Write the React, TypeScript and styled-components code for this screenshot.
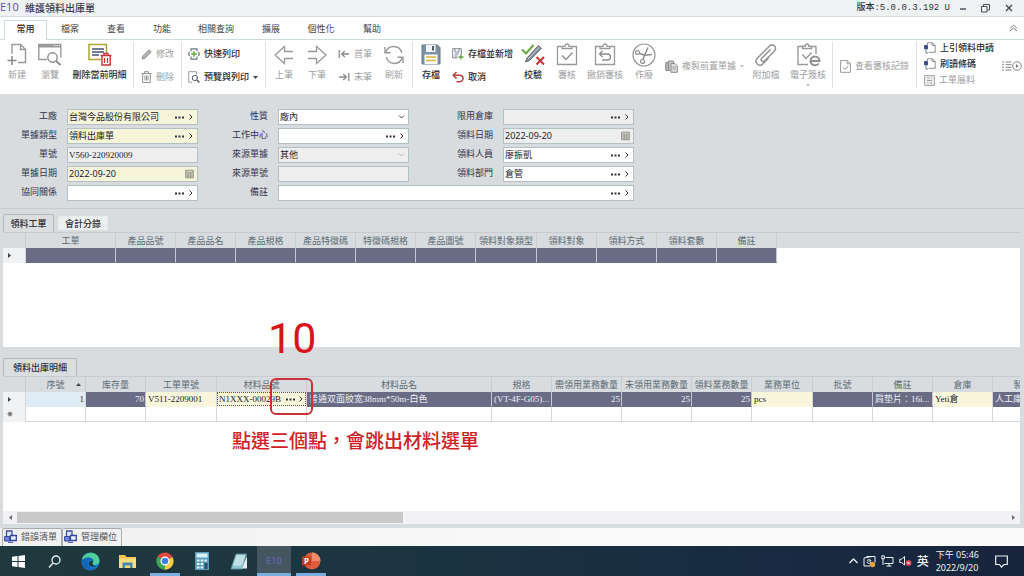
import React from "react";
import styled, { createGlobalStyle, css } from "styled-components";

const sans = `"Noto Sans", "Noto Sans CJK TC", sans-serif`;
const cjk = `"Noto Sans CJK TC", sans-serif`;
const serif = `"Liberation Serif", "Noto Sans CJK TC", serif`;
const mono = `"Liberation Mono", "Noto Sans CJK TC", monospace`;

const GlobalStyle = createGlobalStyle`
  *, *::before, *::after { box-sizing: border-box; }
  body { margin: 0; overflow: hidden; background: #d8dcde; }
  button, input, select {
    font: inherit; color: inherit; border: 0; padding: 0; margin: 0;
    background: none; border-radius: 0; outline: none; min-width: 0;
  }
  svg { display: block; flex: none; }
`;

/* ---------- window frame ---------- */

const Window = styled.div`
  display: flex;
  flex-direction: column;
  min-height: 100vh;
  font: 9px/12px ${cjk};
  color: #2a2a40;
  background: #d8dcde;
`;

const TitleBar = styled.header`
  display: flex;
  align-items: center;
  height: 17px;
  padding-right: 7px;
  background: #eef2f3;
  border-bottom: 1px solid #d5dddf;
`;

const Brand = styled.span`
  width: 25px;
  font: 11px/12px "Open Sans", ${sans};
  color: #5b4fa0;
  padding-bottom: 3px;
`;

const Title = styled.h1`
  margin: 0;
  flex: 1;
  font: 500 10px/16px ${cjk};
  color: #3a3a4a;
`;

const Version = styled.span`
  font: 500 9px/14px ${mono};
  color: #33333d;
  margin-right: 4px;
`;

const WindowButton = styled.button`
  width: 23px;
  height: 16px;
  display: flex;
  align-items: center;
  justify-content: center;
  color: #4a4a55;
  &:last-child { width: 16px; margin-left: 4px; }
  &:first-of-type { width: 16px; margin-right: 4px; }
`;

const MenuTabs = styled.nav`
  display: flex;
  align-items: flex-end;
  height: 23px;
  padding: 0 6px 0 4px;
  background: #fff;
  border-bottom: 1px solid #cddddd;
`;

const MenuTab = styled.button<{ $w: number; $active?: boolean }>`
  width: ${(p) => p.$w}px;
  height: 19px;
  padding-bottom: 2px;
  color: #44444c;
  ${(p) =>
    p.$active &&
    css`
      color: #2a2a30;
      height: 20px;
      margin-bottom: -1px;
      padding-bottom: 3px;
      font-weight: 500;
      background: #fff;
      border: 1px solid #cddddd;
      border-bottom: 0;
    `}
`;

const CollapseButton = styled.button`
  margin-left: auto;
  height: 22px;
  color: #77777f;
`;

/* ---------- ribbon ---------- */

const Ribbon = styled.div`
  display: flex;
  height: 54px;
  overflow: hidden;
  background: #fff;
`;

const Divider = styled.span`
  flex: none;
  width: 1px;
  height: 46px;
  margin-top: 2px;
  background: #e0e3e4;
`;

const BigButton = styled.button<{ $w: number; $on?: boolean }>`
  flex: none;
  display: flex;
  flex-direction: column;
  align-items: center;
  width: ${(p) => p.$w}px;
  padding-top: 3px;
  gap: 2px;
  white-space: nowrap;
  color: ${(p) => (p.$on ? "#2b2b33" : "#a0a0a0")};
  font-weight: ${(p) => (p.$on ? 500 : 400)};
`;

const Stack = styled.div<{ $w: number; $pad: number; $rows: number }>`
  flex: none;
  display: flex;
  flex-direction: column;
  width: ${(p) => p.$w}px;
  padding-left: ${(p) => p.$pad}px;
  padding-top: ${(p) => (p.$rows === 3 ? 0 : p.$rows === 2 ? 6 : 18)}px;
  gap: ${(p) => (p.$rows === 2 ? 7 : 0)}px;
`;

const SmallButton = styled.button<{ $on?: boolean }>`
  display: flex;
  align-items: center;
  height: 16px;
  gap: 4px;
  white-space: nowrap;
  color: ${(p) => (p.$on ? "#2b2b33" : "#a0a0a0")};
  font-weight: ${(p) => (p.$on ? 500 : 400)};
`;

const ListButton = styled.button`
  color: #8b8b8b;
  padding-left: 2px;
  height: 52px;
`;

/* ---------- form ---------- */

const Form = styled.form`
  display: grid;
  grid-template-columns: 57px 131px 60px 131px 74px 131px;
  grid-auto-rows: 16px;
  gap: 3px 10px;
  padding: 15px 0 7px;
  border-bottom: 1px solid #c8ccd0;
`;

const Label = styled.label`
  text-align: right;
  line-height: 14px;
  color: #34344e;
  white-space: nowrap;
`;

const tones = { need: "#f6f4d9", plain: "#ffffff", locked: "#eeeeee" };

const FieldBox = styled.div<{ $tone: keyof typeof tones; $wide?: boolean }>`
  display: flex;
  align-items: center;
  gap: 4px;
  padding: 0 3px 0 1px;
  border: 1px solid #b3c0c4;
  background: ${(p) => tones[p.$tone]};
  ${(p) => p.$wide && "grid-column: span 3;"}
`;

const TextInput = styled.input<{ $date?: boolean }>`
  flex: 1;
  height: 14px;
  font: 9px/14px ${(p) => (p.$date ? sans : serif)};
  color: #22222a;
`;

const Choice = styled.select`
  flex: 1;
  height: 14px;
  appearance: none;
  font: 9px/14px ${serif};
  color: #22222a;
  opacity: 1;
`;

const IconButton = styled.button`
  height: 12px;
  display: flex;
  align-items: center;
  color: #33333b;
`;

/* ---------- grids ---------- */

const Strip = styled.div<{ $h: number }>`
  display: flex;
  align-items: flex-end;
  gap: 4px;
  height: ${(p) => p.$h}px;
  padding-left: 3px;
`;

const SheetTab = styled.button<{ $w: number; $active?: boolean }>`
  width: ${(p) => p.$w}px;
  height: ${(p) => (p.$active ? 18 : 14)}px;
  margin-bottom: ${(p) => (p.$active ? 0 : 2)}px;
  font-weight: 500;
  color: #2e2e38;
  background: ${(p) => (p.$active ? "#dbdedf" : "#eef0f0")};
  border: 1px solid ${(p) => (p.$active ? "#b4b9bd" : "#e8ebec")};
  border-bottom: 0;
  border-radius: 2px 2px 0 0;
`;

const Panel = styled.section`
  position: relative;
  display: flex;
  flex-direction: column;
  flex: 1;
`;

const Sheet = styled.div<{ $min: number }>`
  flex: 1;
  min-height: ${(p) => p.$min}px;
  margin: 0 4px 0 3px;
  overflow: hidden;
  background: #fff;
`;

const Table = styled.table`
  width: 100%;
  table-layout: fixed;
  border-collapse: separate;
  border-spacing: 0;
`;

const Head = styled.th`
  position: relative;
  height: 16px;
  padding: 0;
  overflow: hidden;
  white-space: nowrap;
  font: 9px/14px ${cjk};
  color: #5d6b73;
  background: #d8dcde;
  border-top: 1px solid #c6cccf;
  border-right: 1px solid #c6cccf;
  &:last-child { border-right: 0; }
`;

const cellTones = {
  dark: css`background: #6a6c86; color: #f0f0f6; border-right-color: #c3c6d6;`,
  need: css`background: #f8f6db; color: #22222a;`,
  key: css`background: #dfecf5; color: #22222a;`,
  mark: css`background: #f1f2f3; color: #33333b; padding-left: 4px;`,
  blank: css`background: #fff; border-bottom-color: #d5d7d9;`,
  none: css`background: #fff; border-color: transparent;`,
};

const Cell = styled.td<{ $tone: keyof typeof cellTones; $right?: boolean }>`
  height: 15px;
  padding: 0 1px 0 2px;
  overflow: hidden;
  white-space: nowrap;
  font: 9px/12px ${serif};
  text-align: ${(p) => (p.$right ? "right" : "left")};
  border-right: 1px solid #d5d7d9;
  border-bottom: 1px solid transparent;
  background-clip: border-box;
  ${(p) => cellTones[p.$tone]}
`;

const CellEditor = styled.div`
  display: flex;
  align-items: center;
  gap: 3px;
  height: 14px;
  margin: 0 -1px 0 -2px;
  padding: 0 1px;
  border: 1px dotted #55555c;
`;

const CellInput = styled.input`
  flex: 1;
  height: 12px;
`;

const SortMark = styled.span`
  position: absolute;
  right: 4px;
  top: 5px;
`;

const ScrollRow = styled.div`
  display: flex;
  align-items: center;
  height: 13px;
  margin: 0 4px 4px 3px;
  background: #f2f2f4;
  color: #66666c;
`;

const ScrollArrow = styled.button`
  width: 14px;
  display: flex;
  justify-content: center;
`;

const ScrollTrack = styled.div`
  flex: 1;
`;

const ScrollThumb = styled.div`
  width: 39%;
  height: 11px;
  background: #c9c9c9;
`;

/* ---------- tutorial marks drawn over the grid ---------- */

const StepNumber = styled.strong`
  position: absolute;
  left: 268px;
  top: -34px;
  font: 400 43px/50px Roboto, sans-serif;
  color: #d8151b;
`;

const StepFrame = styled.span`
  position: absolute;
  left: 270px;
  top: 31px;
  width: 43px;
  height: 37px;
  border: 2px solid #c9323a;
  border-radius: 6px;
  pointer-events: none;
`;

const StepText = styled.p`
  position: absolute;
  left: 232px;
  top: 81px;
  margin: 0;
  font: 500 19px/24px ${cjk};
  color: #d02127;
  white-space: nowrap;
`;

/* ---------- bottom ---------- */

const DockBar = styled.div`
  display: flex;
  height: 18px;
  padding-left: 2px;
  background: linear-gradient(90deg, #f0f0f0, #f9faf9 60%);
`;

const DockTab = styled.button<{ $w: number }>`
  display: flex;
  align-items: center;
  gap: 4px;
  width: ${(p) => p.$w}px;
  height: 18px;
  padding: 0 0 2px 1px;
  color: #55555c;
  border: 1px solid #a9acae;
  border-bottom: 0;
  border-radius: 2px 2px 0 0;
`;

const TaskBar = styled.footer`
  display: flex;
  height: 30px;
  color: #eef2f4;
  background: linear-gradient(90deg, #20393e, #1b3440 40%, #182b42 75%, #18243c);
`;

const TaskButton = styled.button<{ $w?: number; $open?: boolean; $active?: boolean }>`
  flex: none;
  display: flex;
  align-items: center;
  justify-content: center;
  width: ${(p) => p.$w ?? 37}px;
  border-bottom: 3px solid transparent;
  border-top: 3px solid transparent;
  ${(p) =>
    p.$open &&
    css`
      background: linear-gradient(#79aee0, #79aee0) bottom / 30px 3px no-repeat border-box;
    `}
  ${(p) =>
    p.$active &&
    css`
      background: linear-gradient(#79aee0, #79aee0) bottom / 100% 3px no-repeat border-box, #44565f border-box;
    `}
`;

const AppMark = styled.span`
  font: 9px/12px ${sans};
  color: #7468c4;
`;

const Tray = styled.div`
  display: flex;
  align-items: center;
  margin-left: auto;
  gap: 5px;
  padding-right: 9px;
`;

const Ime = styled.span`
  font: 500 12px/14px ${cjk};
`;

const Clock = styled.time`
  font: 9px/13px ${sans};
  margin: 0 7px 0 2px;
  white-space: nowrap;
`;

const Notice = styled.button`
  width: 22px;
  padding-left: 4px;
  margin-right: 2px;
  height: 30px;
  display: flex;
  align-items: center;
`;

/* ---------- icons ---------- */

type IconProps = { w: number; h: number; sw?: number; children: React.ReactNode; vb?: string };
const Icon = ({ w, h, sw = 1, vb, children }: IconProps) => (
  <svg width={w} height={h} viewBox={vb ?? `0 0 ${w} ${h}`} fill="none" stroke="currentColor" strokeWidth={sw} aria-hidden="true">
    {children}
  </svg>
);

const NewIcon = () => (
  <Icon w={20} h={24} sw={1.4}>
    <path d="M5 11V1.5h8.5l5 5V19.500H11M13.500 1.500v5h5" stroke="#999" />
    <path d="M5 13v9M.5 17.500h9" stroke="#8d8d8d" strokeWidth={1.600} />
  </Icon>
);
const BrowseIcon = () => (
  <Icon w={24} h={24} sw={1.400}>
    <path d="M9 16.500H.8V1.500h22v13" stroke="#999" />
    <path d="M.8 3.200h22" stroke="#999" strokeWidth={2.600} />
    <path d="M16 2.500h1.200M18.500 2.500h1.200M21 2.500h1" stroke="#fff" strokeWidth={1} />
    <circle cx="14.500" cy="14.500" r="4.700" stroke="#8b8b8b" fill="#fff" />
    <path d="M18 18l4.500 4" stroke="#8b8b8b" strokeWidth={1.700} />
  </Icon>
);
const DeleteRowIcon = () => (
  <Icon w={24} h={24}>
    <path d="M13 16.500H1V1.500h17.500v9" stroke="#b0a530" strokeWidth={1.500} />
    <path d="M4 6h12M4 9h12M4 12h7" stroke="#45507a" strokeWidth={1.400} />
    <path d="M12.500 12.500h11M16 12v-1.500h4V12M14 12.500V22h8.200v-9.500" stroke="#c4343a" strokeWidth={1.400} fill="#fff" />
    <path d="M16.500 15v5M19.500 15v5" stroke="#c4343a" strokeWidth={1.200} />
  </Icon>
);
const PencilIcon = () => (
  <Icon w={11} h={11}>
    <path d="M1 10l.8-3L8 .8l2.200 2.200L4 9.200z" fill="#a6a6a6" stroke="#939393" />
    <path d="M2.500 8L8.500 2" stroke="#eee" strokeWidth={0.600} />
  </Icon>
);
const TrashIcon = () => (
  <Icon w={11} h={12}>
    <path d="M.5 2.500h10M3.500 2V.7h4V2M1.700 2.500v9h7.600v-9M4 4.500v5M5.500 4.500v5M7 4.500v5" stroke="#939393" />
  </Icon>
);
const QuickPrintIcon = () => (
  <Icon w={12} h={12}>
    <path d="M3 3.500V.8h6v2.700M3 8.500v2.700h6V8.500M1.500 4L.7 6l.8 2M10.500 4l.8 2-.8 2" stroke="#6d7680" strokeWidth={1.200} />
    <path d="M6 3.200v5.600M3.200 6h5.600" stroke="#62a83c" strokeWidth={1.500} />
  </Icon>
);
const PreviewIcon = () => (
  <Icon w={12} h={12}>
    <path d="M4 11.200H.7V.7h7.800v3" stroke="#9a9fa4" />
    <circle cx="6.800" cy="7" r="2.600" stroke="#4a5560" fill="#fff" />
    <path d="M8.800 9l2.500 2.500" stroke="#4a5560" strokeWidth={1.400} />
  </Icon>
);
const ArrowBig = ({ flip }: { flip?: boolean }) => (
  <Icon w={20} h={24} sw={1.300}>
    <path transform={flip ? "translate(20 0) scale(-1 1)" : undefined} d="M19 8.500h-8.500V3.500L1 12l9.500 8.500v-5H19" stroke="#999" />
  </Icon>
);
const FirstIcon = ({ flip }: { flip?: boolean }) => (
  <Icon w={12} h={10} sw={1.300}>
    <path transform={flip ? "translate(12 0) scale(-1 1)" : undefined} d="M1.200 1v8M11 5H4M6.800 2L3.700 5l3.100 3" stroke="#8a8a8a" />
  </Icon>
);
const RefreshIcon = () => (
  <Icon w={20} h={24} sw={1.400}>
    <path d="M1.800 9.500A8.300 8.300 0 0 1 17.800 9.800M18.200 14.500A8.300 8.300 0 0 1 2.200 14.200" stroke="#999" />
    <path d="M1 4v5.800h5.500M19 20v-5.800h-5.500" stroke="#999" />
  </Icon>
);
const SaveIcon = () => (
  <Icon w={20} h={24}>
    <path d="M1 2h15.500L19 4.500V21H1z" fill="#7d93a3" stroke="#657b8c" />
    <path d="M5 2h9.500v7H5z" fill="#f1f5f7" stroke="none" />
    <path d="M11 3h2v4.500h-2z" fill="#4c5d6b" stroke="none" />
    <path d="M3.500 11.500h13V21h-13z" fill="#fff" stroke="none" />
    <path d="M5 14h10M5 17.500h10" stroke="#d9b535" strokeWidth={1.400} />
  </Icon>
);
const SaveNewIcon = () => (
  <Icon w={12} h={12}>
    <path d="M.7.7h8.600v6M5.500 9.800H.7V.7" stroke="#7b8791" />
    <path d="M3 1v3h4V1M2.500 6h4.500M2.500 8h3" stroke="#7b8791" />
    <path d="M9 6.500v5M6.500 9H11.500" stroke="#5da437" strokeWidth={1.400} />
  </Icon>
);
const UndoIcon = () => (
  <Icon w={12} h={12} sw={1.500}>
    <path d="M4.500 1L1.200 4.200l3.300 3.200M1.500 4.200h6.300a3.200 3.200 0 0 1 0 6.500H4.500" stroke="#b8433f" />
  </Icon>
);
const CheckIcon = () => (
  <Icon w={24} h={24}>
    <path d="M1 6.500L5 10.500 12.500 2" stroke="#65a844" strokeWidth={2} />
    <path d="M4.500 19l1.500-4L17.500 2.500l3 2.700L8.500 17.500z" fill="#8a9299" stroke="#5e666d" />
    <path d="M7 16L18.500 4" stroke="#d9dde0" strokeWidth={0.800} />
    <path d="M15.500 14l7.500 7.500M23 14l-7.500 7.500" stroke="#c1363b" strokeWidth={2} />
  </Icon>
);
const Clipboard = ({ children }: { children: React.ReactNode }) => (
  <Icon w={24} h={24} sw={1.300}>
    <path d="M6.500 3.500h-4v18h19v-18h-4" stroke="#999" />
    <path d="M7 5.500v-2.200h3C10 1.500 11 1 12 1s2 .5 2 2.300h3v2.200z" stroke="#999" />
    <g stroke="#8d8d8d">{children}</g>
  </Icon>
);
const VoidIcon = () => (
  <Icon w={24} h={24} sw={1.200}>
    <circle cx="12" cy="12" r="11" stroke="#999" />
    <circle cx="5.500" cy="9.500" r="1.900" stroke="#8d8d8d" />
    <circle cx="10.500" cy="18.500" r="2" stroke="#8d8d8d" />
    <path d="M7.300 10.300L12.500 12.300 20 11.500M11 16.500L12.500 12.300 16 4.500" stroke="#8d8d8d" strokeWidth={1.500} />
  </Icon>
);
const CopyIcon = () => (
  <Icon w={13} h={13}>
    <path d="M3.500 10.500H.7V2.500H3" fill="#b5b5b5" stroke="#8d8d8d" />
    <path d="M3.500 1h5v9.500h-5z" fill="#c9c9c9" stroke="#8d8d8d" />
    <path d="M6 3.500h4l2.300 2.300v6.500H6z" fill="#ddd" stroke="#8d8d8d" />
    <path d="M7.500 7h3.300M7.500 9h3.300" stroke="#8d8d8d" strokeWidth={0.800} />
  </Icon>
);
const ClipIcon = () => (
  <Icon w={24} h={24} sw={1.500}>
    <path d="M16.500 6.500L7.800 15.300c-1.900 1.900.8 4.600 2.700 2.700L20.300 8.200c3.600-3.600-1.500-8.600-5-5L3.500 15c-4.500 4.500 1.800 9.500 5 6.300l6-6" stroke="#939393" />
  </Icon>
);
const SignIcon = () => (
  <Icon w={26} h={24} sw={1.400}>
    <path d="M7 3.500H3v18h10M17 3.500h4V11" stroke="#999" />
    <path d="M7.500 5.500v-2.200h2.700C10.200 1.500 11 1 12 1s1.800.5 1.800 2.300h2.700v2.200zM7.500 11.500l3.500 4 5.500-6" stroke="#999" />
    <path d="M15.500 18h9c0-5.800-9-6-9 0 0 4.800 6.300 5.300 8.500 2.500" stroke="#909090" strokeWidth={1.900} fill="#fff" />
  </Icon>
);
const RecordIcon = () => (
  <Icon w={11} h={13}>
    <path d="M.6.600h6.800l3 3v8.700H.6zM7.200.8v3h3" stroke="#999" />
    <path d="M3 7.500l2 2 3.200-3.500" stroke="#8a8a8a" />
  </Icon>
);
const LoadIcon = () => (
  <Icon w={12} h={12}>
    <path d="M3.500 3V.8h5l2.700 2.500v7H4.500M8.200 1v2.500h3" stroke="#8c8f96" />
    <path d="M.5 3.500h3v3.500h-3z" fill="#41508c" stroke="#41508c" />
    <path d="M2 8v3h2" stroke="#777" />
  </Icon>
);
const ExpandIcon = () => (
  <Icon w={11} h={11}>
    <path d="M.6.600h9.800v9.800H.6z" fill="#eee" stroke="#a2a2a2" />
    <path d="M3 3h2M6.500 3H8M3 5.500h5M3 8h1.500M6 8h2" stroke="#a2a2a2" />
  </Icon>
);
const MoreIcon = () => (
  <Icon w={20} h={12}>
    <path d="M0 2h2M0 4.700h2M0 7.300h2M0 10h2M3.500 2h6M3.500 4.700h6M3.500 7.300h6M3.500 10h6" stroke="#858585" />
    <circle cx="15" cy="6" r="4.300" />
    <path d="M14 4v4l2.500-2z" fill="#777" stroke="none" />
  </Icon>
);
const Dots = () => (
  <Icon w={9} h={3}>
    <path d="M0 .5h2v2H0zM3.500.5h2v2h-2zM7 .5h2v2H7z" fill="currentColor" stroke="none" />
  </Icon>
);
const Chevron = () => (
  <Icon w={6} h={8}>
    <path d="M1.500 1.500L4 4 1.500 6.500" />
  </Icon>
);
const DownChevron = ({ color }: { color: string }) => (
  <Icon w={7} h={6}>
    <path d="M1 1.500L3.500 4 6 1.500" stroke={color} />
  </Icon>
);
const CalendarIcon = () => (
  <Icon w={9} h={10}>
    <path d="M.7 1.200h7.600v7.600H.7zM.7 3h7.600M.7 5h7.600M.7 7h7.600M3.200 3v6M5.800 3v6" stroke="#8a8a80" strokeWidth={0.900} />
  </Icon>
);
const Triangle = ({ d, color = "#444", w = 5, h = 5 }: { d: string; color?: string; w?: number; h?: number }) => (
  <Icon w={w} h={h}>
    <path d={d} fill={color} stroke="none" />
  </Icon>
);
const DockIcon = () => (
  <Icon w={13} h={13}>
    <path d="M2.500 1h5.500v6.500H2.500z" fill="#dfe6fb" stroke="#3b4fa5" strokeWidth={1.300} />
    <path d="M.6 6.500h5v4.500h-5z" fill="#6f86d6" stroke="#34479b" />
    <path d="M6.500 5.500h5.800v5H6.500z" fill="#eef2ff" stroke="#34479b" strokeWidth={1.300} />
    <path d="M4 12.300h5" stroke="#34479b" />
  </Icon>
);

/* ---------- form parts ---------- */

type FieldProps = {
  id: string;
  label: string;
  value?: string;
  tone?: keyof typeof tones;
  kind?: "lookup" | "date" | "text" | "select";
  wide?: boolean;
};

const Field = ({ id, label, value = "", tone = "plain", kind = "lookup", wide }: FieldProps) => (
  <>
    <Label htmlFor={id}>{label}</Label>
    <FieldBox $tone={tone} $wide={wide}>
      {kind === "select" ? (
        <>
          <Choice id={id} defaultValue={value}>
            <option>{value}</option>
          </Choice>
          <DownChevron color={tone === "locked" ? "#b5b5b5" : "#44444c"} />
        </>
      ) : (
        <TextInput id={id} defaultValue={value} $date={kind === "date"} />
      )}
      {kind === "lookup" && (
        <>
          <IconButton type="button" aria-label="選擇"><Dots /></IconButton>
          <IconButton type="button" aria-label="開啟"><Chevron /></IconButton>
        </>
      )}
      {kind === "date" && (
        <IconButton type="button" aria-label="日曆"><CalendarIcon /></IconButton>
      )}
    </FieldBox>
  </>
);

const menus: [string, number][] = [
  ["檔案", 46], ["查看", 46], ["功能", 46], ["相關查詢", 62], ["擴展", 48], ["個性化", 52], ["幫助", 50],
];

const orderColumns: [string, number][] = [
  ["工單", 90], ["產品品號", 60], ["產品品名", 60], ["產品規格", 60], ["產品特徵碼", 60], ["特徵碼規格", 60],
  ["產品圖號", 60], ["領料對象類型", 61], ["領料對象", 60], ["領料方式", 60], ["領料套數", 60], ["備註", 60],
];

const detailColumns: [string, number][] = [
  ["序號", 60], ["库存量", 60], ["工單單號", 71], ["材料品號", 90], ["材料品名", 185], ["規格", 60],
  ["需領用業務數量", 70], ["未領用業務數量", 70], ["領料業務數量", 60], ["業務單位", 61], ["批號", 60],
  ["備註", 60], ["倉庫", 60], ["製程", 60],
];

const Columns = ({ items }: { items: [string, number][] }) => (
  <colgroup>
    <col style={{ width: 23 }} />
    {items.map(([name, width]) => <col key={name} style={{ width }} />)}
    <col />
  </colgroup>
);

const HeadRow = ({ items, sorted }: { items: [string, number][]; sorted?: string }) => (
  <thead>
    <tr>
      <Head />
      {items.map(([name]) => (
        <Head key={name} scope="col">
          {name}
          {sorted === name && <SortMark><Triangle d="M0 4L2.500 1 5 4z" /></SortMark>}
        </Head>
      ))}
      <Head />
    </tr>
  </thead>
);

export default function App() {
  return (
    <Window>
      <GlobalStyle />
      <TitleBar>
        <Brand>E10</Brand>
        <Title>維護領料出庫單</Title>
        <Version>版本:5.0.0.3.192 U</Version>
        <WindowButton aria-label="最小化"><Icon w={7} h={8} sw={1.400}><path d="M1 5h6" /></Icon></WindowButton>
        <WindowButton aria-label="還原"><Icon w={9} h={9}><path d="M.5 2.500h5.500v5.500H.5zM2.500 2.500v-2h6v5.500h-2" /></Icon></WindowButton>
        <WindowButton aria-label="關閉"><Icon w={8} h={8} sw={1.400}><path d="M1 1l6 6M7 1L1 7" /></Icon></WindowButton>
      </TitleBar>

      <MenuTabs>
        <MenuTab $w={43} $active>常用</MenuTab>
        {menus.map(([name, w]) => <MenuTab key={name} $w={w}>{name}</MenuTab>)}
        <CollapseButton aria-label="收合"><Icon w={9} h={8}><path d="M1 4.500L4.500 1 8 4.500M1 7l3.500-3L8 7" /></Icon></CollapseButton>
      </MenuTabs>

      <Ribbon>
        <BigButton $w={34}><NewIcon />新建</BigButton>
        <BigButton $w={32}><BrowseIcon />瀏覽</BigButton>
        <BigButton $w={67} $on><DeleteRowIcon />刪除當前明細</BigButton>
        <Divider />
        <Stack $w={47} $pad={7} $rows={2}>
          <SmallButton><PencilIcon />修改</SmallButton>
          <SmallButton><TrashIcon />刪除</SmallButton>
        </Stack>
        <Divider />
        <Stack $w={83} $pad={6} $rows={2}>
          <SmallButton $on><QuickPrintIcon />快速列印</SmallButton>
          <SmallButton $on><PreviewIcon />預覽與列印<Triangle d="M0 1h5L2.500 4z" /></SmallButton>
        </Stack>
        <Divider />
        <BigButton $w={36}><ArrowBig />上筆</BigButton>
        <BigButton $w={30}><ArrowBig flip />下筆</BigButton>
        <Stack $w={44} $pad={6} $rows={2}>
          <SmallButton><FirstIcon />首筆</SmallButton>
          <SmallButton><FirstIcon flip />末筆</SmallButton>
        </Stack>
        <BigButton $w={36}><RefreshIcon />刷新</BigButton>
        <Divider />
        <BigButton $w={36} $on><SaveIcon />存檔</BigButton>
        <Stack $w={70} $pad={3} $rows={2}>
          <SmallButton $on><SaveNewIcon />存檔並新增</SmallButton>
          <SmallButton $on><UndoIcon />取消</SmallButton>
        </Stack>
        <BigButton $w={28} $on><CheckIcon />校驗</BigButton>
        <BigButton $w={40}><Clipboard><path d="M7 12.500l4 4 6.500-7" /></Clipboard>審核</BigButton>
        <BigButton $w={36}><Clipboard><path d="M9.500 8L6.500 11l3 3M7 11h7.500a3 3 0 0 1 0 6H9" /></Clipboard>撤銷審核</BigButton>
        <BigButton $w={42}><VoidIcon />作廢</BigButton>
        <Stack $w={83} $pad={0} $rows={1}>
          <SmallButton><CopyIcon />複製前置單據<Triangle w={5} d="M0 1h4L2 3.500z" color="#bbb" /></SmallButton>
        </Stack>
        <BigButton $w={36}><ClipIcon />附加檔</BigButton>
        <BigButton $w={48}><SignIcon />電子簽核<Triangle w={5} d="M0 1h4L2 3.500z" color="#bbb" /></BigButton>
        <Divider />
        <Stack $w={83} $pad={7} $rows={1}>
          <SmallButton><RecordIcon />查看審核記錄</SmallButton>
        </Stack>
        <Divider />
        <Stack $w={83} $pad={7} $rows={3}>
          <SmallButton $on><LoadIcon />上引領料申請</SmallButton>
          <SmallButton $on><LoadIcon />刷讀條碼</SmallButton>
          <SmallButton><ExpandIcon />工單展料</SmallButton>
        </Stack>
        <ListButton aria-label="更多"><MoreIcon /></ListButton>
      </Ribbon>

      <Form>
        <Field id="plant" label="工廠" value="台灣今品股份有限公司" tone="need" />
        <Field id="nature" label="性質" value="廠內" kind="select" />
        <Field id="limit" label="限用倉庫" tone="locked" />
        <Field id="doctype" label="單據類型" value="領料出庫單" tone="need" />
        <Field id="center" label="工作中心" />
        <Field id="pickdate" label="領料日期" value="2022-09-20" tone="locked" kind="date" />
        <Field id="docno" label="單號" value="V560-220920009" tone="locked" kind="text" />
        <Field id="source" label="來源單據" value="其他" tone="locked" kind="select" />
        <Field id="person" label="領料人員" value="廖振凱" />
        <Field id="docdate" label="單據日期" value="2022-09-20" tone="need" kind="date" />
        <Field id="sourceno" label="來源單號" tone="locked" kind="text" />
        <Field id="dept" label="領料部門" value="倉管" />
        <Field id="relation" label="協同關係" />
        <Field id="remark" label="備註" wide />
      </Form>

      <Panel>
        <Strip $h={23}>
          <SheetTab $w={51} $active>領料工單</SheetTab>
          <SheetTab $w={50}>會計分錄</SheetTab>
        </Strip>
        <Sheet $min={115}>
          <Table>
            <Columns items={orderColumns} />
            <HeadRow items={orderColumns} />
            <tbody>
              <tr>
                <Cell $tone="mark"><Triangle d="M1 0l3 2.500-3 2.500z" /></Cell>
                {orderColumns.map(([name]) => <Cell key={name} $tone="dark" />)}
                <Cell $tone="none" />
              </tr>
            </tbody>
          </Table>
        </Sheet>
      </Panel>

      <Panel>
        <Strip $h={29}>
          <SheetTab $w={74} $active>領料出庫明細</SheetTab>
        </Strip>
        <Sheet $min={135}>
          <Table>
            <Columns items={detailColumns} />
            <HeadRow items={detailColumns} sorted="序號" />
            <tbody>
              <tr>
                <Cell $tone="mark"><Triangle d="M1 0l3 2.500-3 2.500z" /></Cell>
                <Cell $tone="key" $right>1</Cell>
                <Cell $tone="dark" $right>70</Cell>
                <Cell $tone="need">V511-2209001</Cell>
                <Cell $tone="need">
                  <CellEditor>
                    <CellInput aria-label="材料品號" defaultValue="N1XXX-00029B" />
                    <IconButton aria-label="選擇"><Dots /></IconButton>
                    <IconButton aria-label="開啟"><Chevron /></IconButton>
                  </CellEditor>
                </Cell>
                <Cell $tone="dark">普通双面胶宽38mm*50m-白色</Cell>
                <Cell $tone="dark">(VT-4F-G05)...</Cell>
                <Cell $tone="dark" $right>25</Cell>
                <Cell $tone="dark" $right>25</Cell>
                <Cell $tone="dark" $right>25</Cell>
                <Cell $tone="need">pcs</Cell>
                <Cell $tone="dark" />
                <Cell $tone="dark">肩垫片：16i...</Cell>
                <Cell $tone="need">Yeti倉</Cell>
                <Cell $tone="dark">人工庫</Cell>
                <Cell $tone="none" />
              </tr>
              <tr>
                <Cell $tone="mark"><Icon w={6} h={6}><circle cx="3" cy="3" r="2" fill="#777" stroke="#999" /></Icon></Cell>
                {detailColumns.map(([name]) => <Cell key={name} $tone="blank" />)}
                <Cell $tone="none" />
              </tr>
            </tbody>
          </Table>
        </Sheet>
        <ScrollRow>
          <ScrollArrow aria-label="向左"><Triangle d="M4 0L1 2.500 4 5z" color="#66666c" /></ScrollArrow>
          <ScrollTrack><ScrollThumb /></ScrollTrack>
          <ScrollArrow aria-label="向右"><Triangle d="M1 0l3 2.500L1 5z" color="#66666c" /></ScrollArrow>
        </ScrollRow>
        <StepNumber>10</StepNumber>
        <StepFrame />
        <StepText>點選三個點，會跳出材料選單</StepText>
      </Panel>

      <DockBar>
        <DockTab $w={60}><DockIcon />錯誤清單</DockTab>
        <DockTab $w={60}><DockIcon />管理欄位</DockTab>
      </DockBar>

      <TaskBar>
        <TaskButton $w={36} aria-label="開始">
          <Icon w={13} h={13}><path d="M0 1.800L5.500 1v5H0zM6.500.900L13 0v6H6.500zM0 7h5.500v5L0 11.200zM6.500 7H13v6l-6.500-.900z" fill="#fff" stroke="none" /></Icon>
        </TaskButton>
        <TaskButton $w={36} aria-label="搜尋">
          <Icon w={13} h={13} sw={1.300}><circle cx="8" cy="5" r="4" /><path d="M5 8L1 12.500" /></Icon>
        </TaskButton>
        <TaskButton aria-label="Edge">
          <Icon w={19} h={19}>
            <circle cx="9.500" cy="9.500" r="9" fill="#1d7fd0" stroke="none" />
            <path d="M1 8C2.500-2 18-1.500 18.500 8.500c0 5-6.500 5-7 3 0-1 1-1.200 1-3C12 5 5 4 1 8z" fill="#4fd09a" stroke="none" />
            <path d="M1 8c4-4 10-3 11 .5-2-1.500-5.500 0-5 3.500.5 4 5.500 5.500 9.500 3C11 21 .5 19 .5 9.500z" fill="#1567b8" stroke="none" />
            <path d="M12 9c-2-1-4.500.5-4.300 3 .3 2.500 4.300 4 8.300 2.500-2 .3-4.500-1-4.500-3 0-1 .5-1.500.5-2.500z" fill="#1f3b44" stroke="none" />
          </Icon>
        </TaskButton>
        <TaskButton aria-label="檔案總管">
          <Icon w={17} h={15}>
            <path d="M0 1h6l1.500 2H17v11H0z" fill="#f0c552" stroke="none" />
            <path d="M0 4.500h17V14H0z" fill="#f9dc7b" stroke="none" />
            <path d="M3.500 14V8.500h10V14h-2.500v-2.500H6V14z" fill="#4289b8" stroke="none" />
          </Icon>
        </TaskButton>
        <TaskButton $open aria-label="Chrome">
          <Icon w={18} h={18}>
            <path d="M9 9L1.600 4.500A8.700 8.700 0 0 1 16.600 5z" fill="#dd4a3c" stroke="none" />
            <path d="M9 9l7.600-4A8.700 8.700 0 0 1 8.500 17.700z" fill="#f7cb42" stroke="none" />
            <path d="M9 9l-.5 8.700A8.700 8.700 0 0 1 1.600 4.500z" fill="#3fa556" stroke="none" />
            <circle cx="9" cy="9" r="3.900" fill="#3f7fe6" stroke="#fff" strokeWidth={1.200} />
          </Icon>
        </TaskButton>
        <TaskButton aria-label="小算盤">
          <Icon w={14} h={18}>
            <path d="M0 0h14v18H0z" fill="#5b9fbd" stroke="none" />
            <path d="M1.500 1.500h11v4h-11z" fill="#d9f0f5" stroke="none" />
            <path d="M2 8.500h10M2 12h6.500M2 15.500h6.500" stroke="#e8f4f8" strokeWidth={2.200} strokeDasharray="2.500 1.200" />
            <path d="M9.500 11h3v6h-3z" fill="#23506e" stroke="none" />
          </Icon>
        </TaskButton>
        <TaskButton aria-label="記事本">
          <Icon w={18} h={17}>
            <path d="M6 1h10.500l-4 15H1z" fill="#8fc3cb" stroke="#5d8e98" />
            <path d="M6.500 2h9L12 12c-3 1-6 1-9 .5z" fill="#bfe0e4" stroke="none" />
            <path d="M17 3v12.500h-5z" fill="#e6eeee" stroke="none" />
          </Icon>
        </TaskButton>
        <TaskButton $w={34} $active aria-label="E10"><AppMark>E10</AppMark></TaskButton>
        <TaskButton $w={40} $open aria-label="PowerPoint">
          <svg width="20" height="18" viewBox="0 0 20 18" aria-hidden="true">
            <circle cx="11" cy="9" r="8.500" fill="#dd5c3c" />
            <path d="M11 .5A8.500 8.500 0 0 1 19.500 9H11z" fill="#f08a6c" />
            <rect x="1" y="4.500" width="9" height="9" rx="1" fill="#c23c1e" />
            <text x="3" y="12" fontSize="8" fontWeight="700" fontFamily="Noto Sans, sans-serif" fill="#fff">P</text>
          </svg>
        </TaskButton>
        <Tray>
          <Icon w={9} h={8} sw={1.300}><path d="M.5 6l4-4 4 4" /></Icon>
          <Icon w={13} h={13}>
            <path d="M1 3l8-1.500M1 3v8h6M3.500 1.500H12v6M4 5.500c1.500-1.500 4-1 4 .5H5.500M4 6.500c0 2 3 2.500 4 1" />
            <circle cx="9.500" cy="9.500" r="2.700" fill="#e9a13a" stroke="none" />
          </Icon>
          <Icon w={13} h={12}><path d="M4.500 2.500H12v6H3.500M8 8.500v2.500M5.500 11h5M.8.800h2.500v3H.8zM2 4v6" /></Icon>
          <Icon w={13} h={12}>
            <path d="M.8 4.200h1.700l3-2.700v8.500l-3-2.500H.8z" />
            <circle cx="9.500" cy="8" r="3" fill="#d2404d" stroke="none" />
            <path d="M8.200 6.700l2.600 2.600M10.800 6.700L8.200 9.300" stroke="#fff" strokeWidth={0.900} />
          </Icon>
          <Ime>英</Ime>
          <Clock>下午 05:46<br />2022/9/20</Clock>
          <Notice aria-label="通知">
            <Icon w={13} h={13} sw={1.200}><path d="M.7 1h11.600v8.500H9L6.500 12 4.500 9.500H.7z" /></Icon>
          </Notice>
        </Tray>
      </TaskBar>
    </Window>
  );
}
